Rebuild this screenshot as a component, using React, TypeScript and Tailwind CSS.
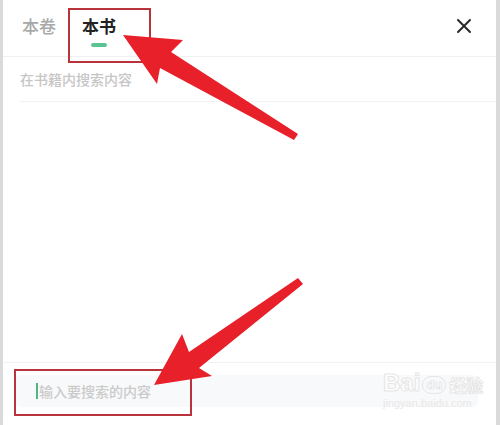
import React from "react";

export default function App() {
  const font = { fontFamily: '"Noto Sans CJK SC", "Noto Sans", sans-serif' };
  return (
    <div
      className="relative w-[500px] h-[425px] overflow-hidden bg-white border-l-[3px] border-r-[4px] border-[#dadada] flex flex-col"
      style={font}
    >
      {/* header tabs */}
      <div className="h-[57px] border-b border-[#f0f0f0] flex items-start pl-[19px] pr-[24px] shrink-0">
        <div className="pt-[14px] text-[17px] leading-[24px] font-medium text-[#a8a8a8]">本卷</div>
        <div className="ml-[26px] pt-[14px] flex flex-col items-center">
          <div className="text-[17px] leading-[24px] font-bold text-[#222]">本书</div>
          <div className="mt-[5px] w-[16px] h-[4px] rounded-full bg-[#5cc492]" />
        </div>
        <div className="ml-auto pt-[18px]">
          <svg width="16" height="16" viewBox="0 0 16 16">
            <path d="M2 2 L14 14 M14 2 L2 14" stroke="#2a2a2a" strokeWidth="2" strokeLinecap="round" />
          </svg>
        </div>
      </div>

      {/* search hint */}
      <div className="ml-[17px] h-[45px] border-b border-[#f2f2f2] flex items-center shrink-0">
        <span className="text-[14px] font-medium text-[#c6c6c6]">在书籍内搜索内容</span>
      </div>

      <div className="flex-1" />

      {/* bottom input */}
      <div className="border-t border-[#f2f2f2] pt-[12px] pb-[18px] pl-[12px] pr-[18px] shrink-0">
        <div className="h-[32px] rounded-[6px] bg-[#f8f9fa] flex items-center pl-[21px]">
          <div className="w-[2px] h-[16px] bg-[#4fb583]" />
          <span className="ml-[1px] text-[14px] font-medium text-[#cbcbcb]">输入要搜索的内容</span>
        </div>
      </div>

      {/* baidu watermark */}
      <div className="absolute left-[380px] top-[370px] flex flex-col items-start pointer-events-none" style={{ fontFamily: '"Liberation Sans", "Noto Sans CJK SC", sans-serif' }}>
        <div className="flex items-end">
          <span className="text-[24px] leading-[26px] font-bold text-white" style={{ WebkitTextStroke: "1px #e6e6e6" }}>Bai</span>
          <span className="ml-[2px] mb-[2px] px-[3px] rounded-full border border-[#e6e6e6] text-[13px] leading-[16px] font-bold text-white" style={{ WebkitTextStroke: "0.6px #e0e0e0" }}>du</span>
          <span className="ml-[3px] text-[17px] leading-[22px] font-bold text-white" style={{ WebkitTextStroke: "0.8px #e4e4e4", fontFamily: '"Noto Sans CJK SC", sans-serif' }}>经验</span>
        </div>
        <span className="text-[11px] leading-[14px] text-[#e8e8e8]">jingyan.baidu.com</span>
      </div>

      {/* red annotation boxes */}
      <div className="absolute left-[65px] top-[8px] w-[83px] h-[55px] border-2 border-[#b9333b]" />
      <div className="absolute left-[11px] top-[369px] w-[178px] h-[47px] border-2 border-[#b9333b]" />

      {/* arrows */}
      <svg className="absolute left-[-3px] top-0" width="500" height="425" viewBox="0 0 500 425">
        <polygon
          points="123,35 183,40 171,52 298,134 294,140 160,68 157,84"
          fill="#e8202a"
        />
        <polygon
          points="154,385 182,334 189,352 298,278 303,284 199,368 212,376"
          fill="#e8202a"
        />
      </svg>
    </div>
  );
}
